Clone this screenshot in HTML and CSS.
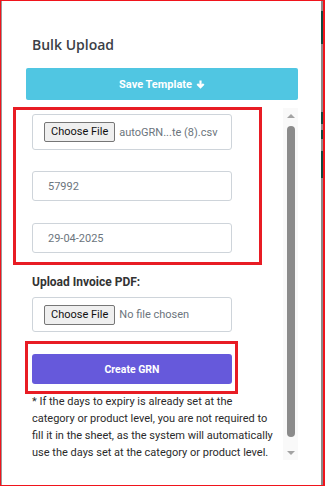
FILE: index.html
```html
<!DOCTYPE html>
<html lang="en">
<head>
<meta charset="utf-8">
<title>Bulk Upload</title>
<link rel="stylesheet" href="styles.css">
</head>
<body>
<div class="frame">
  <div class="edge-left"></div>
  <div class="modal">
    <h2 class="title">Bulk Upload</h2>
    <button class="btn-save" type="button">Save Template
      <svg class="arrow" viewBox="0 0 10 10" width="9" height="9" aria-hidden="true"><path d="M5 9.6 L0.6 5.2 L2.3 3.6 L3.8 5.1 V0.6 H6.2 V5.1 L7.7 3.6 L9.4 5.2 Z" fill="#fff"/></svg>
    </button>
    <div class="scroll">
      <div class="scroll-content">
        <div class="file-field">
          <span class="file-btn">Choose File</span>
          <span class="file-name">autoGRN...te (8).csv</span>
        </div>
        <div class="text-field gap-a">57992</div>
        <div class="text-field gap-b">29-04-2025</div>
        <div class="label">Upload Invoice PDF:</div>
        <div class="file-field file-field-2">
          <span class="file-btn">Choose File</span>
          <span class="file-name">No file chosen</span>
        </div>
        <button class="btn-create" type="button">Create GRN</button>
        <p class="note">* If the days to expiry is already set at the category or product level, you are not required to fill it in the sheet, as the system will automatically use the days set at the category or product level.</p>
      </div>
      <div class="scrollbar">
        <div class="sb-arrow"><span class="tri-up"></span></div>
        <div class="sb-thumb"></div>
        <div class="sb-arrow"><span class="tri-down"></span></div>
      </div>
    </div>
  </div>
  <div class="edge-right"></div>
  <div class="mark mark-1"></div>
  <div class="mark mark-2"></div>
</div>
</body>
</html>
```
FILE: styles.css
```css
* { box-sizing: border-box; }
html, body { margin: 0; padding: 0; }
body { background: #fff; font-family: Roboto, "Liberation Sans", Arial, sans-serif; }

.frame {
  position: relative;
  width: 325px;
  height: 486px;
  display: flex;
  border-top: 1px solid #f0141c;
  border-left: 1px solid #f0141c;
  border-right: 2px solid #f0141c;
  border-bottom: 1px solid #f0141c;
  overflow: hidden;
}
.edge-left { width: 1px; background: #9a9a9a; flex: none; }
.edge-right {
  width: 2px;
  flex: none;
  background: linear-gradient(#8a8a8a 0 10px, #0f4a40 10px 43px, #8a8a8a 43px 111px, #0f4a40 111px 123px, #8a8a8a 123px 129px, #0f4a40 129px 138px, #8a8a8a 138px 150px, #0f4a40 150px 177px, #8a8a8a 177px);
  margin-left: 1px;
}
.modal {
  width: 318px;
  flex: none;
  background: #fff;
  padding: 0 22px 0 24px;
  display: flex;
  flex-direction: column;
}
.title {
  margin: 34px 0 0 6px;
  font-family: "Open Sans", sans-serif;
  font-weight: 600;
  font-size: 14px;
  line-height: 20px;
  color: #3b4046;
}
.btn-save {
  margin-top: 13px;
  height: 32px;
  width: 272px;
  border: 0;
  border-radius: 2px;
  background: #50c6e2;
  color: #fff;
  font-family: Roboto, sans-serif;
  font-weight: 700;
  font-size: 11px;
  display: flex;
  align-items: center;
  justify-content: center;
  gap: 4px;
  padding: 0;
}
.arrow { display: block; }

.scroll {
  margin-top: 8px;
  height: 352px;
  width: 272px;
  display: flex;
}
.scroll-content {
  width: 257px;
  overflow: hidden;
  padding: 6px 0 0 6px;
  display: flex;
  flex-direction: column;
}
.file-field {
  width: 200px;
  height: 36px;
  border: 1px solid #ced4da;
  border-radius: 3px;
  display: flex;
  align-items: center;
  padding-left: 11px;
  gap: 4px;
  flex: none;
}
.file-field-2 { height: 35px; margin-top: 7px; }
.file-btn {
  height: 20px;
  padding: 0 6px;
  border: 1px solid #767676;
  border-radius: 2px;
  background: #efefef;
  color: #111;
  font-size: 11px;
  line-height: 18px;
}
.file-name { color: #6c757d; font-size: 11px; }
.text-field {
  width: 200px;
  height: 30px;
  border: 1px solid #ced4da;
  border-radius: 3px;
  padding-left: 15px;
  display: flex;
  align-items: center;
  color: #6c757d;
  font-size: 11px;
  flex: none;
}
.gap-a { margin-top: 21px; }
.gap-b { margin-top: 22px; }
.label {
  margin-top: 21px;
  font-weight: 700;
  font-size: 12px;
  line-height: 16px;
  color: #333;
}
.btn-create {
  margin-top: 22px;
  width: 200px;
  height: 30px;
  flex: none;
  border: 0;
  border-radius: 3px;
  background: #6659db;
  color: #fff;
  font-family: Roboto, sans-serif;
  font-weight: 700;
  font-size: 10.5px;
  padding: 0;
}
.note {
  margin: 9px 0 0;
  width: 244px;
  font-size: 11px;
  line-height: 17px;
  color: #2b2b2b;
}

.scrollbar {
  width: 15px;
  background: #f9f9f9;
  display: flex;
  flex-direction: column;
  align-items: center;
}
.sb-arrow {
  height: 15px;
  width: 15px;
  display: flex;
  align-items: center;
  justify-content: center;
  flex: none;
}
.tri-up, .tri-down {
  width: 0; height: 0;
  border-left: 4px solid transparent;
  border-right: 4px solid transparent;
}
.tri-up { border-bottom: 4px solid #a3a3a3; }
.tri-down { border-top: 4px solid #a3a3a3; }
.sb-thumb {
  width: 8px;
  margin: 3px 0 8px;
  flex: 1;
  border-radius: 4px;
  background: #8b8b8b;
}

.mark {
  position: absolute;
  border: 3px solid #e81c24;
  pointer-events: none;
}
.mark-1 { left: 12px; top: 106px; width: 249px; height: 158px; }
.mark-2 { left: 24px; top: 340px; width: 213px; height: 53px; }
```
